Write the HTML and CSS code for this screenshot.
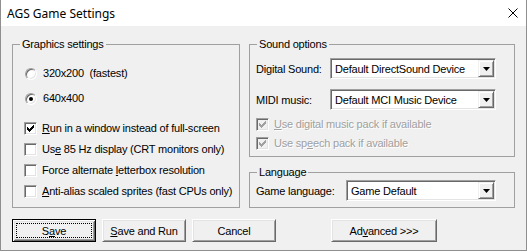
FILE: index.html
```html
<!DOCTYPE html>
<html>
<head>
<meta charset="utf-8">
<title>AGS Game Settings</title>
<link rel="stylesheet" href="styles.css">
</head>
<body>
<div class="window">
  <div class="titlebar">
    <span class="title">AGS Game Settings</span>
    <svg class="close" width="10" height="10" viewBox="0 0 10 10"><path d="M0.5 0.5L9.5 9.5M9.5 0.5L0.5 9.5" stroke="#000" stroke-width="1" fill="none"/></svg>
  </div>
  <div class="client">
    <div class="panels">
      <fieldset class="group graphics">
        <legend>Graphics settings</legend>
        <div class="body graphics-body">
          <div class="opt"><span class="radio"></span><span>320x200&nbsp; (fastest)</span></div>
          <div class="opt radio-next"><span class="radio checked"></span><span>640x400</span></div>
          <div class="opt check-first"><span class="check"><svg width="7" height="7" viewBox="0 0 7 7"><path d="M0 2h1v3h-1zM1 3h1v3h-1zM2 4h1v3h-1zM3 3h1v3h-1zM4 2h1v3h-1zM5 1h1v3h-1zM6 0h1v3h-1z" fill="#000"/></svg></span><span><u>R</u>un in a window instead of full-screen</span></div>
          <div class="opt check-next"><span class="check"></span><span>Us<u>e</u> 85 Hz display (CRT monitors only)</span></div>
          <div class="opt check-next"><span class="check"></span><span>Force alternate <u>l</u>etterbox resolution</span></div>
          <div class="opt check-next"><span class="check"></span><span><u>A</u>nti-alias scaled sprites (fast CPUs only)</span></div>
        </div>
      </fieldset>
      <div class="right-col">
        <fieldset class="group sound">
          <legend>Sound options</legend>
          <div class="body sound-body">
            <div class="field">
              <span class="field-label">Digital Sound:</span>
              <div class="combo combo-sound"><span class="combo-text">Default DirectSound Device</span><span class="combo-btn"><svg width="7" height="4" viewBox="0 0 7 4"><path d="M0 0h7l-3.5 4z" fill="#000"/></svg></span></div>
            </div>
            <div class="field field-next">
              <span class="field-label">MIDI music:</span>
              <div class="combo combo-sound"><span class="combo-text">Default MCI Music Device</span><span class="combo-btn"><svg width="7" height="4" viewBox="0 0 7 4"><path d="M0 0h7l-3.5 4z" fill="#000"/></svg></span></div>
            </div>
            <div class="opt disabled sound-check-first"><span class="check"><svg width="7" height="7" viewBox="0 0 7 7"><path d="M0 2h1v3h-1zM1 3h1v3h-1zM2 4h1v3h-1zM3 3h1v3h-1zM4 2h1v3h-1zM5 1h1v3h-1zM6 0h1v3h-1z" fill="#a0a0a0"/></svg></span><span><u>U</u>se digital music pack if available</span></div>
            <div class="opt disabled sound-check-next"><span class="check"><svg width="7" height="7" viewBox="0 0 7 7"><path d="M0 2h1v3h-1zM1 3h1v3h-1zM2 4h1v3h-1zM3 3h1v3h-1zM4 2h1v3h-1zM5 1h1v3h-1zM6 0h1v3h-1z" fill="#a0a0a0"/></svg></span><span>Use sp<u>e</u>ech pack if available</span></div>
          </div>
        </fieldset>
        <fieldset class="group language">
          <legend>Language</legend>
          <div class="body language-body">
            <div class="field">
              <span class="field-label lang-label">Game language:</span>
              <div class="combo combo-lang"><span class="combo-text">Game Default</span><span class="combo-btn"><svg width="7" height="4" viewBox="0 0 7 4"><path d="M0 0h7l-3.5 4z" fill="#000"/></svg></span></div>
            </div>
          </div>
        </fieldset>
      </div>
    </div>
    <div class="buttons">
      <button class="btn btn-default"><span class="focus">S<u>a</u>ve</span></button>
      <button class="btn"><span><u>S</u>ave and Run</span></button>
      <button class="btn"><span>Cancel</span></button>
      <button class="btn btn-wide"><span>Ad<u>v</u>anced &gt;&gt;&gt;</span></button>
    </div>
  </div>
</div>
</body>
</html>
```
FILE: styles.css
```css
* { box-sizing: border-box; }

body {
  margin: 0;
  background: #ffffff;
  font-family: "Liberation Sans", Arial, sans-serif;
  font-size: 11px;
  letter-spacing: -0.2px;
  color: #000;
}

.window {
  width: 527px;
  height: 251px;
  border: 1px solid #8f8f8f;
  border-top: 0;
  background: #f0f0f0;
  display: flex;
  flex-direction: column;
}

.titlebar {
  height: 26px;
  background: #ffffff;
  display: flex;
  align-items: center;
  padding: 0 8px 0 6px;
}

.title {
  font-family: "Noto Sans", "Open Sans", sans-serif;
  font-size: 12px;
  letter-spacing: 0;
}

.close { margin-left: auto; }

.client {
  flex: 1;
  padding: 12px 11px 0 11px;
}

.panels {
  display: flex;
  gap: 9px;
  align-items: stretch;
}

.group {
  margin: 0;
  padding: 0;
  min-width: 0;
  border: 1px solid #a0a0a0;
}

.group legend {
  margin-left: 7px;
  padding: 0 2px;
  line-height: 13px;
  height: 13px;
}

.graphics { width: 228px; }

.right-col {
  width: 266px;
  display: flex;
  flex-direction: column;
}

.graphics-body { padding: 14px 0 0 11px; }

.opt {
  display: flex;
  align-items: center;
  height: 17px;
  line-height: 13px;
  white-space: nowrap;
}

.radio-next { margin-top: 8px; }
.check-first { margin-top: 13px; }
.check-next { margin-top: 4px; }

.radio {
  width: 12px;
  height: 12px;
  margin: 0 6px 0 1px;
  border-radius: 50%;
  border: 1px solid;
  border-color: #a0a0a0 #ffffff #ffffff #a0a0a0;
  box-shadow: inset 1px 1px #696969, inset -1px -1px #e3e3e3;
  background: #ffffff;
  display: flex;
  align-items: center;
  justify-content: center;
  flex: none;
}

.radio.checked::after {
  content: "";
  width: 4px;
  height: 4px;
  border-radius: 50%;
  background: #000;
}

.check {
  width: 13px;
  height: 13px;
  margin-right: 5px;
  border: 1px solid;
  border-color: #a0a0a0 #ffffff #ffffff #a0a0a0;
  box-shadow: inset 1px 1px #696969, inset -1px -1px #e3e3e3;
  background: #ffffff;
  display: flex;
  align-items: center;
  justify-content: center;
  flex: none;
}

.check svg { display: block; }

.disabled { color: #a0a0a0; text-shadow: 1px 1px #ffffff; }
.disabled .check { background: #f0f0f0; }

.sound-body { padding: 7px 0 4px 6px; }

.field {
  display: flex;
  align-items: center;
  white-space: nowrap;
}

.field-next { margin-top: 10px; }

.field-label { width: 74px; flex: none; }
.lang-label { width: 90px; }

.sound-check-first { margin-top: 6px; }
.sound-check-next { margin-top: 2px; }

.language { margin-top: 9px; }
.language-body { padding: 1px 0 6px 6px; }

.combo {
  height: 21px;
  background: #ffffff;
  border: 1px solid;
  border-color: #a0a0a0 #ffffff #ffffff #a0a0a0;
  box-shadow: inset 1px 1px #696969, inset -1px -1px #e3e3e3;
  display: flex;
  align-items: center;
}

.combo-sound { width: 166px; }
.combo-lang { width: 150px; }

.combo-text {
  flex: 1;
  padding-left: 4px;
  overflow: hidden;
}

.combo-btn {
  width: 16px;
  height: 17px;
  margin-right: 1px;
  background: #f0f0f0;
  border: 1px solid;
  border-color: #f0f0f0 #696969 #696969 #f0f0f0;
  box-shadow: inset 1px 1px #ffffff, inset -1px -1px #a0a0a0;
  display: flex;
  align-items: center;
  justify-content: center;
}

.combo-btn svg { display: block; }

.buttons {
  display: flex;
  gap: 6px;
  margin-top: 11px;
}

.btn {
  width: 84px;
  height: 23px;
  padding: 0;
  margin: 0;
  font: inherit;
  letter-spacing: inherit;
  color: #000;
  background: #f0f0f0;
  border: 1px solid;
  border-color: #ffffff #696969 #696969 #ffffff;
  box-shadow: inset 1px 1px #e3e3e3, inset -1px -1px #a0a0a0;
  display: flex;
  align-items: center;
  justify-content: center;
}

.btn-default {
  border: 1px solid #000;
  box-shadow: inset 1px 1px #ffffff, inset -1px -1px #696969, inset 2px 2px #e3e3e3, inset -2px -2px #a0a0a0;
  padding: 3px;
}

.btn-default .focus {
  flex: 1;
  align-self: stretch;
  border: 1px dotted #000;
  display: flex;
  align-items: center;
  justify-content: center;
}

.btn-wide {
  width: 106px;
  margin-left: 49px;
}
```
